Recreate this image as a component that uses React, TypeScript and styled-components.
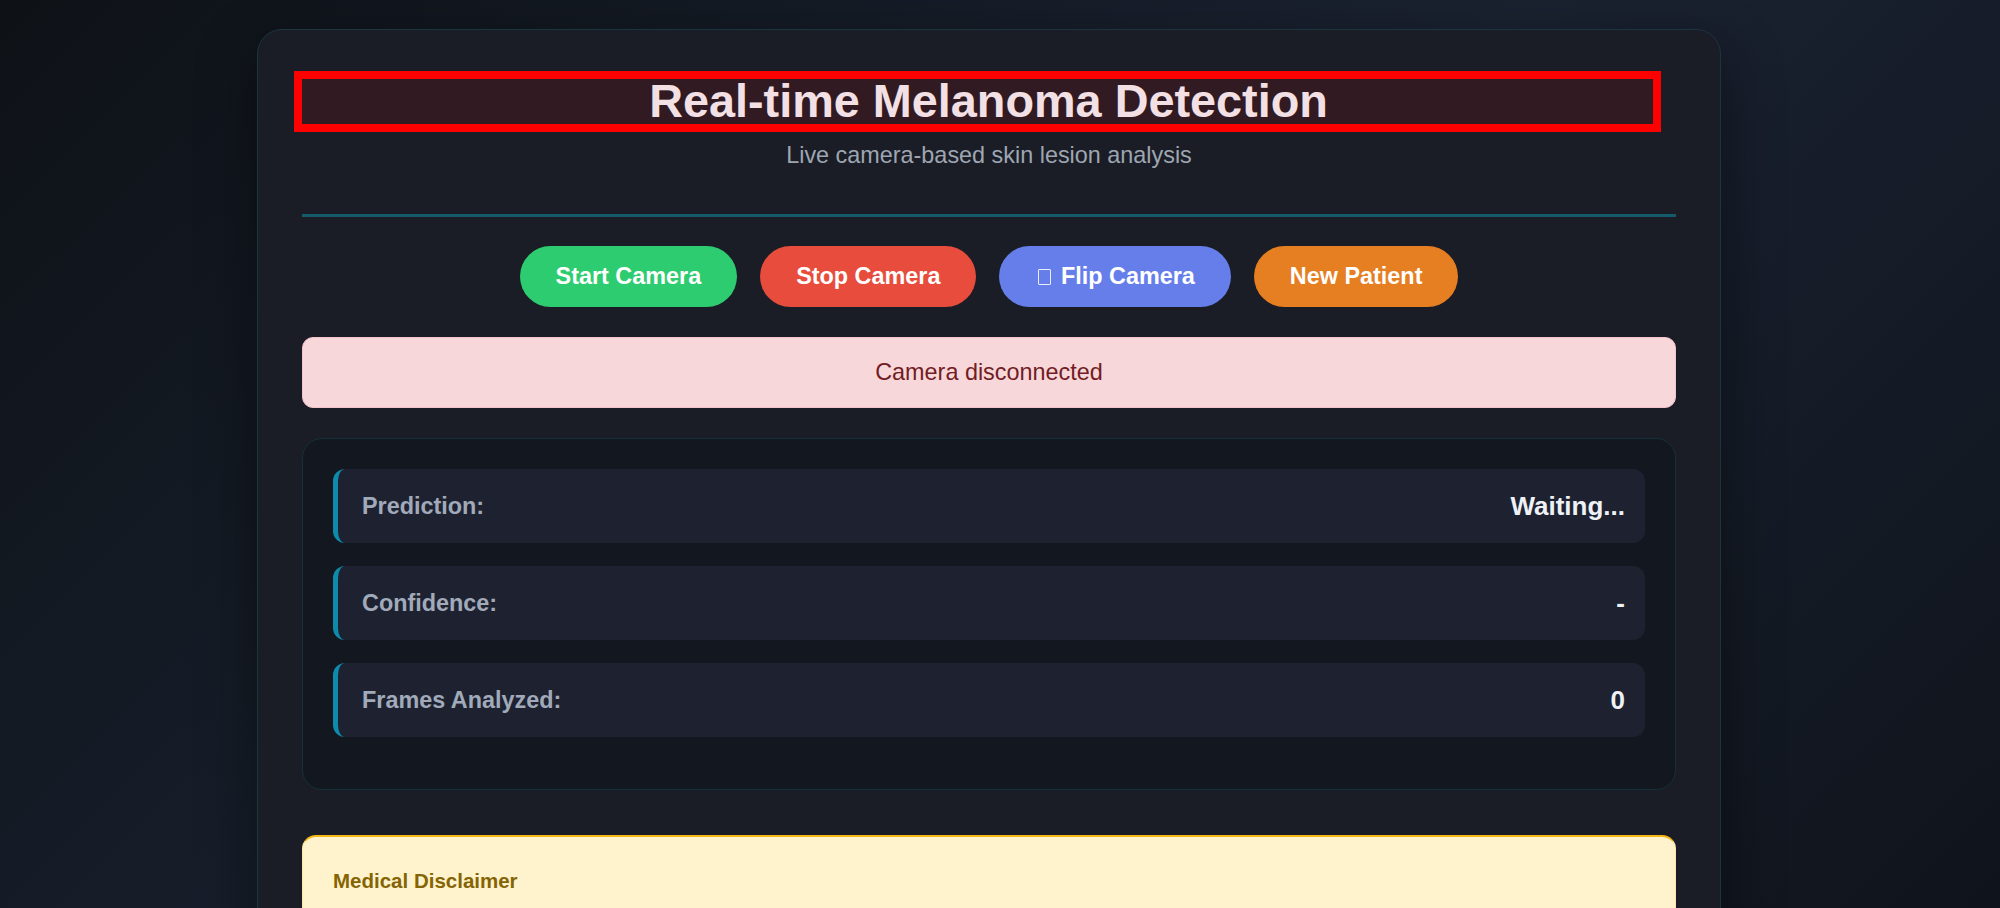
import styled, { createGlobalStyle } from "styled-components";

const GlobalStyle = createGlobalStyle`
  html, body {
    margin: 0;
    padding: 0;
  }
  body {
    min-height: 100vh;
    background: linear-gradient(135deg, #0e1217 0%, #1a2231 50%, #0e1219 100%);
    font-family: "Liberation Sans", Arial, sans-serif;
    color: #e8ecf1;
  }
`;

const Page = styled.div`
  padding: 29px 22px 29px 0;
`;

const Card = styled.main`
  box-sizing: border-box;
  width: 1464px;
  margin: 0 auto;
  padding: 44px;
  background: #1a1d25;
  border: 1px solid #1b3540;
  border-radius: 25px;
  box-shadow: 0 20px 60px rgba(0, 0, 0, 0.45);
`;

const Header = styled.header`
  padding: 5px 0 45px;
  border-bottom: 3px solid #155a6b;
  text-align: center;
`;

const Title = styled.h1`
  box-sizing: border-box;
  width: calc(100% - 23px);
  margin: 0 0 18px;
  padding-left: 22px;
  font-size: 46.8px;
  line-height: 45px;
  font-weight: 700;
  color: #f3e0e5;
  background: rgba(255, 0, 0, 0.1);
  outline: 8.5px solid #ff0000;
`;

const Subtitle = styled.p`
  margin: 0;
  font-size: 23.4px;
  line-height: 27px;
  color: #9ea6b2;
`;

const Controls = styled.div`
  display: flex;
  justify-content: center;
  gap: 23px;
  margin-top: 29px;
`;

const Button = styled.button<{ $bg: string }>`
  display: flex;
  align-items: center;
  gap: 6.5px;
  padding: 17px 36px;
  border: none;
  border-radius: 31px;
  background: ${(p) => p.$bg};
  color: #ffffff;
  font-family: "Liberation Sans", Arial, sans-serif;
  font-size: 23.4px;
  line-height: 27px;
  font-weight: 700;
  cursor: pointer;
`;

/* the flip icon shows as a missing-glyph box in the original */
const MissingGlyph = styled.span`
  display: inline-block;
  box-sizing: border-box;
  width: 13px;
  height: 16px;
  margin: 0 3px;
  border: 1.5px solid rgba(255, 255, 255, 0.85);
  border-radius: 1px;
`;

const Status = styled.div`
  margin-top: 30px;
  padding: 21px;
  border: 1px solid #f3c5ca;
  border-radius: 11px;
  background: #f8d7da;
  color: #721c24;
  font-size: 23.4px;
  line-height: 27px;
  text-align: center;
`;

const Results = styled.section`
  margin-top: 30px;
  padding: 30px 30px 29px;
  background: #13171f;
  border: 1px solid #15303a;
  border-radius: 20px;
`;

const Row = styled.div`
  display: flex;
  align-items: center;
  justify-content: space-between;
  height: 74px;
  box-sizing: border-box;
  margin-bottom: 23px;
  padding: 0 20px 0 24px;
  background: #1e2230;
  border-left: 5px solid #0e8aab;
  border-radius: 12px;
`;

const Label = styled.span`
  font-size: 23.4px;
  font-weight: 700;
  color: #a1aaba;
`;

const Value = styled.span`
  font-size: 26px;
  font-weight: 700;
  color: #eef1f5;
`;

const Disclaimer = styled.section`
  margin-top: 45px;
  padding: 32px 30px 30px;
  background: #fff3cd;
  border: 1px solid #ffe8a1;
  border-top: 2px solid #f5b714;
  border-radius: 14px;
  color: #856404;
`;

const DisclaimerTitle = styled.h4`
  margin: 0 0 30px;
  font-size: 20.5px;
  line-height: 24px;
  font-weight: 700;
`;

const DisclaimerText = styled.p`
  margin: 0;
  font-size: 18.7px;
  line-height: 28px;
`;

const rows = [
  { label: "Prediction:", value: "Waiting..." },
  { label: "Confidence:", value: "-" },
  { label: "Frames Analyzed:", value: "0" },
];

export default function App() {
  return (
    <>
      <GlobalStyle />
      <Page>
        <Card>
          <Header>
            <Title>Real-time Melanoma Detection</Title>
            <Subtitle>Live camera-based skin lesion analysis</Subtitle>
          </Header>

          <Controls>
            <Button $bg="#2ecc71">Start Camera</Button>
            <Button $bg="#e74c3c">Stop Camera</Button>
            <Button $bg="#667eea">
              <MissingGlyph aria-label="flip" />
              Flip Camera
            </Button>
            <Button $bg="#e67e22">New Patient</Button>
          </Controls>

          <Status>Camera disconnected</Status>

          <Results>
            {rows.map((r) => (
              <Row key={r.label}>
                <Label>{r.label}</Label>
                <Value>{r.value}</Value>
              </Row>
            ))}
          </Results>

          <Disclaimer>
            <DisclaimerTitle>Medical Disclaimer</DisclaimerTitle>
            <DisclaimerText>
              This tool is intended for research and educational purposes only and is not a
              substitute for professional medical diagnosis. Always consult a qualified
              dermatologist about any skin concerns.
            </DisclaimerText>
          </Disclaimer>
        </Card>
      </Page>
    </>
  );
}
